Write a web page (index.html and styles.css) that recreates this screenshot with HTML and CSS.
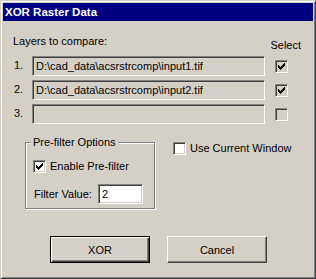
FILE: index.html
```html
<!DOCTYPE html>
<html lang="en">
<head>
    <meta charset="UTF-8">
    <meta name="viewport" content="width=device-width, initial-scale=1.0">
    <title>XOR Raster Data</title>
    <link rel="stylesheet" href="styles.css">
</head>
<body>
    <div class="window">
        <div class="titlebar">XOR Raster Data</div>
        <div class="content">
            <div class="list-head">
                <span>Layers to compare:</span>
                <span class="select-label">Select</span>
            </div>

            <div class="layers">
                <span class="num">1.</span>
                <div class="edit readonly">D:\cad_data\acsrstrcomp\input1.tif</div>
                <span class="check gray checked"><svg width="7" height="7" viewBox="0 0 7 7"><path d="M6 0h1v1h-1zM5 1h2v1h-2zM0 2h1v1h-1zM4 2h3v1h-3zM0 3h2v1h-2zM3 3h3v1h-3zM0 4h5v1h-5zM1 5h3v1h-3zM2 6h1v1h-1z"/></svg></span>

                <span class="num">2.</span>
                <div class="edit readonly">D:\cad_data\acsrstrcomp\input2.tif</div>
                <span class="check gray checked"><svg width="7" height="7" viewBox="0 0 7 7"><path d="M6 0h1v1h-1zM5 1h2v1h-2zM0 2h1v1h-1zM4 2h3v1h-3zM0 3h2v1h-2zM3 3h3v1h-3zM0 4h5v1h-5zM1 5h3v1h-3zM2 6h1v1h-1z"/></svg></span>

                <span class="num">3.</span>
                <div class="edit readonly"></div>
                <span class="check gray"></span>
            </div>

            <div class="options">
                <div class="group">
                    <div class="group-title">Pre-filter Options</div>
                    <label class="check-row">
                        <span class="check checked"><svg width="7" height="7" viewBox="0 0 7 7"><path d="M6 0h1v1h-1zM5 1h2v1h-2zM0 2h1v1h-1zM4 2h3v1h-3zM0 3h2v1h-2zM3 3h3v1h-3zM0 4h5v1h-5zM1 5h3v1h-3zM2 6h1v1h-1z"/></svg></span>
                        Enable Pre-filter
                    </label>
                    <div class="filter-row">
                        <span>Filter Value:</span>
                        <div class="edit small">2</div>
                    </div>
                </div>
                <label class="check-row window-opt">
                    <span class="check"></span>
                    Use Current Window
                </label>
            </div>

            <div class="buttons">
                <button class="btn default">XOR</button>
                <button class="btn">Cancel</button>
            </div>
        </div>
    </div>
</body>
</html>
```

FILE: styles.css
```css
body {
    margin: 0;
    font-family: "Liberation Sans", Arial, sans-serif;
    font-size: 11px;
    line-height: 13px;
    color: #000;
    background-color: #d4d0c8;
}

.window {
    width: 316px;
    height: 279px;
    box-sizing: border-box;
    background-color: #d4d0c8;
    border: 1px solid;
    border-color: #d4d0c8 #404040 #404040 #d4d0c8;
    box-shadow: inset 1px 1px #fff, inset -1px -1px #808080;
    padding: 2px;
}

.titlebar {
    height: 18px;
    line-height: 18px;
    background-color: #000080;
    color: #fff;
    font-weight: bold;
    font-size: 11.5px;
    padding-left: 2px;
}

.content {
    padding: 14px 0 0 10px;
}

.list-head {
    display: flex;
    justify-content: space-between;
    height: 21px;
    width: 288px;
}

.select-label {
    align-self: flex-end;
    margin-bottom: 4px;
}

.layers {
    display: grid;
    grid-template-columns: 18px 233px 1fr;
    grid-auto-rows: 20px;
    row-gap: 4px;
    align-items: center;
    padding-left: 1px;
}

.num {
    margin-top: -2px;
}

.edit {
    box-sizing: border-box;
    height: 20px;
    border: 1px solid;
    border-color: #808080 #fff #fff #808080;
    box-shadow: inset 1px 1px #404040, inset -1px -1px #d4d0c8;
    padding: 3px 3px 0;
    background-color: #fff;
    white-space: nowrap;
    overflow: hidden;
}

.edit.readonly {
    background-color: #d4d0c8;
}

.edit.small {
    width: 45px;
}

.check {
    display: inline-flex;
    align-items: center;
    justify-content: center;
    box-sizing: border-box;
    width: 13px;
    height: 13px;
    border: 1px solid;
    border-color: #808080 #fff #fff #808080;
    box-shadow: inset 1px 1px #404040, inset -1px -1px #d4d0c8;
    background-color: #fff;
    flex: none;
}

.check.gray {
    background-color: #d4d0c8;
}

.layers .check {
    margin-left: 10px;
}

.check svg {
    display: block;
    fill: #000;
}

.options {
    display: flex;
    align-items: flex-start;
    margin: 18px 0 0 12px;
}

.group {
    box-sizing: border-box;
    width: 130px;
    height: 67px;
    border: 1px solid #808080;
    box-shadow: inset 1px 1px #fff, 1px 1px #fff;
    padding: 0 0 0 7px;
}

.group-title {
    width: fit-content;
    margin: -7px 0 0 -2px;
    padding: 0 2px;
    background-color: #d4d0c8;
}

.check-row {
    display: flex;
    align-items: center;
    gap: 4px;
}

.group .check-row {
    margin-top: 11px;
}

.filter-row {
    display: flex;
    align-items: center;
    gap: 6px;
    margin-top: 11px;
    padding-left: 1px;
}

.window-opt {
    margin-left: 18px;
}

.buttons {
    display: flex;
    gap: 17px;
    margin: 27px 0 0 37px;
}

.btn {
    box-sizing: border-box;
    width: 100px;
    height: 27px;
    font-family: inherit;
    font-size: 11px;
    color: #000;
    background-color: #d4d0c8;
    border: 1px solid;
    border-color: #fff #404040 #404040 #fff;
    box-shadow: inset -1px -1px #808080;
    padding: 0;
}

.btn.default {
    border: 1px solid #000;
    box-shadow: inset 1px 1px #fff, inset -1px -1px #404040, inset -2px -2px #808080;
}
```
